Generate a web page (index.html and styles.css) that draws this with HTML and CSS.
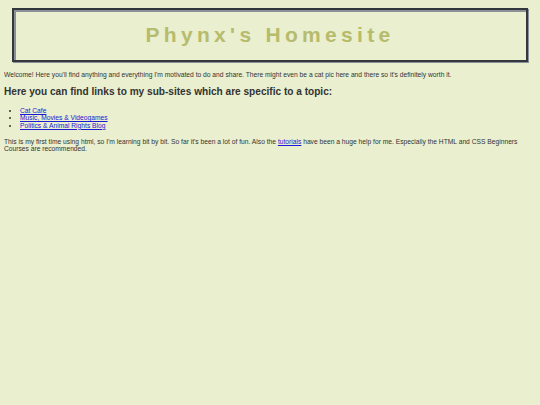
FILE: index.html
```html
<!DOCTYPE html>
<html>
<head>
<meta charset="utf-8">
<title>Phynx's Homesite</title>
<link rel="stylesheet" href="styles.css">
</head>
<body>
<header class="banner">
  <h1 class="title">Phynx's Homesite</h1>
</header>
<p class="text">Welcome! Here you'll find anything and everything I'm motivated to do and share. There might even be a cat pic here and there so it's definitely worth it.</p>
<h2 class="subtitle">Here you can find links to my sub-sites which are specific to a topic:</h2>
<ul class="links">
  <li><a href="#">Cat Cafe</a></li>
  <li><a href="#">Music, Movies &amp; Videogames</a></li>
  <li><a href="#">Politics &amp; Animal Rights Blog</a></li>
</ul>
<p class="text">This is my first time using html, so I'm learning bit by bit. So far it's been a lot of fun. Also the <a href="#">tutorials</a> have been a huge help for me. Especially the HTML and CSS Beginners Courses are recommended.</p>
</body>
</html>
```

FILE: styles.css
```css
html {
  background: #e9efcf;
}
body {
  margin: 4px;
  font-family: "Liberation Sans", Arial, sans-serif;
  font-size: 6.7px;
  color: #333333;
}
.banner {
  margin: 4px 8px 0;
  border: 2px solid #34383d;
  box-shadow: 1px 1px 0 #8a9098, inset 2px 2px 0 #8a9098;
  text-align: center;
}
.title {
  margin: 0;
  font-size: 21px;
  line-height: 50px;
  letter-spacing: 4.3px;
  color: #b7bb6c;
  font-weight: bold;
}
.text {
  margin: 8.5px 0 7.4px;
  line-height: 7.6px;
}
.subtitle {
  margin: 8.4px 0 8.2px;
  font-size: 10.1px;
  line-height: 12px;
  color: #333333;
}
.links {
  margin: 8.2px 0 7.2px;
  padding-left: 16px;
  line-height: 7.5px;
}
a {
  color: #1a1ad6;
}
```
